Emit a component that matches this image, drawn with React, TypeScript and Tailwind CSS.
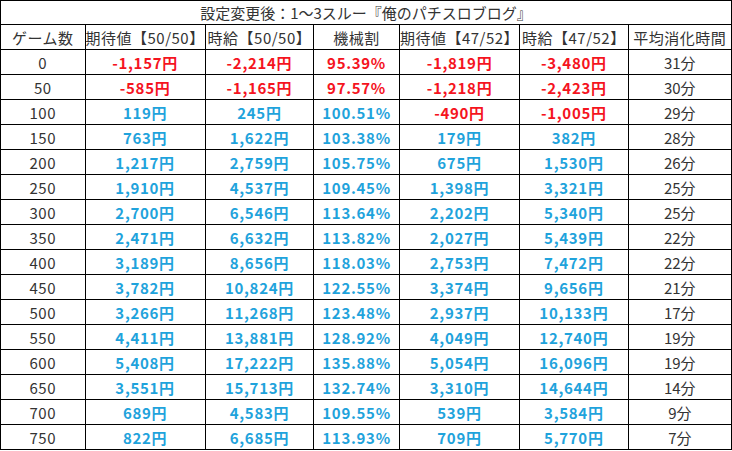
const RED = "text-[#f5141e]";
const BLUE = "text-[#1fa3dc]";

type Row = [number, string, string, string, string, string, string];

const rows: Row[] = [
  [0, "-1,157円", "-2,214円", "95.39%", "-1,819円", "-3,480円", "31分"],
  [50, "-585円", "-1,165円", "97.57%", "-1,218円", "-2,423円", "30分"],
  [100, "119円", "245円", "100.51%", "-490円", "-1,005円", "29分"],
  [150, "763円", "1,622円", "103.38%", "179円", "382円", "28分"],
  [200, "1,217円", "2,759円", "105.75%", "675円", "1,530円", "26分"],
  [250, "1,910円", "4,537円", "109.45%", "1,398円", "3,321円", "25分"],
  [300, "2,700円", "6,546円", "113.64%", "2,202円", "5,340円", "25分"],
  [350, "2,471円", "6,632円", "113.82%", "2,027円", "5,439円", "22分"],
  [400, "3,189円", "8,656円", "118.03%", "2,753円", "7,472円", "22分"],
  [450, "3,782円", "10,824円", "122.55%", "3,374円", "9,656円", "21分"],
  [500, "3,266円", "11,268円", "123.48%", "2,937円", "10,133円", "17分"],
  [550, "4,411円", "13,881円", "128.92%", "4,049円", "12,740円", "19分"],
  [600, "5,408円", "17,222円", "135.88%", "5,054円", "16,096円", "19分"],
  [650, "3,551円", "15,713円", "132.74%", "3,310円", "14,644円", "14分"],
  [700, "689円", "4,583円", "109.55%", "539円", "3,584円", "9分"],
  [750, "822円", "6,685円", "113.93%", "709円", "5,770円", "7分"],
];

const headers = ["ゲーム数", "期待値【50/50】", "時給【50/50】", "機械割", "期待値【47/52】", "時給【47/52】", "平均消化時間"];
const widths = ["w-[93px]", "w-[109px]", "w-[110px]", "w-[92px]", "w-[109px]", "w-[110px]", "w-[107px]"];

// red for losses and payout under 100%
function tone(value: string) {
  if (value.startsWith("-")) return RED;
  if (value.endsWith("%") && parseFloat(value) < 100) return RED;
  return BLUE;
}

function Cell({ children, className = "" }: { children: React.ReactNode; className?: string }) {
  return (
    <td className="h-[25px] overflow-hidden border border-black p-0">
      <div className={`flex justify-center whitespace-nowrap leading-none ${className}`}>{children}</div>
    </td>
  );
}

export default function App() {
  return (
    <div className="bg-white text-[15px] text-[#333] [font-family:'Noto_Sans_CJK_JP','Noto_Sans',sans-serif]">
      <table className="table-fixed border-collapse">
        <colgroup>
          {widths.map((w, i) => <col key={i} className={w} />)}
        </colgroup>
        <tbody>
          <tr>
            <td colSpan={7} className="h-[24px] border border-black p-0 text-center leading-none">
              設定変更後：1〜3スルー『俺のパチスロブログ』
            </td>
          </tr>
          <tr>
            {headers.map((h) => <Cell key={h} className="tracking-[0.5px]">{h}</Cell>)}
          </tr>
          {rows.map((row) => (
            <tr key={row[0]}>
              <Cell className="tracking-[0.5px]">{row[0]}</Cell>
              {row.slice(1, 6).map((v, i) => (
                <Cell key={i} className={`font-bold tracking-[0.7px] ${tone(v as string)}`}>{v}</Cell>
              ))}
              <Cell>{row[6]}</Cell>
            </tr>
          ))}
        </tbody>
      </table>
    </div>
  );
}
